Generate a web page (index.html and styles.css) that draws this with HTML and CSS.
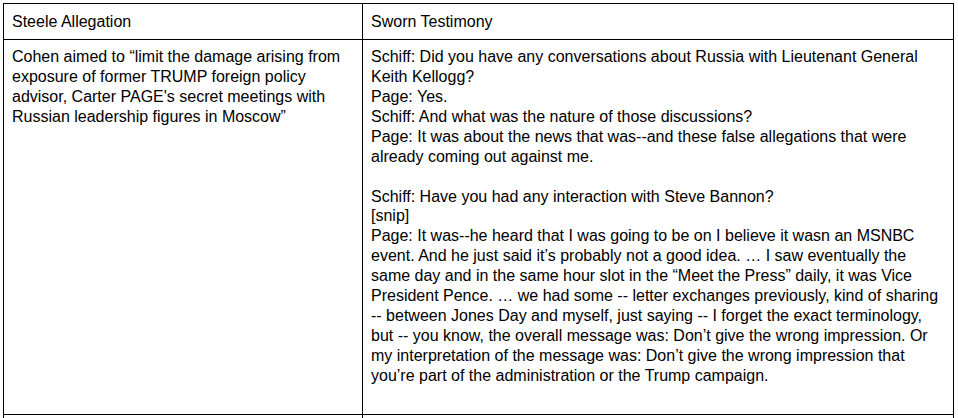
FILE: index.html
```html
<!DOCTYPE html>
<html>
<head>
<meta charset="utf-8">
<link rel="stylesheet" href="styles.css">
</head>
<body>
<table class="doc-table">
  <colgroup>
    <col class="col-left">
    <col class="col-right">
  </colgroup>
  <tr class="head-row">
    <td>Steele Allegation</td>
    <td>Sworn Testimony</td>
  </tr>
  <tr class="body-row">
    <td>Cohen aimed to “limit the damage arising from exposure of former TRUMP foreign policy advisor, Carter PAGE's secret meetings with Russian leadership figures in Moscow”</td>
    <td>
      <p>Schiff: Did you have any conversations about Russia with Lieutenant General Keith Kellogg?<br>Page: Yes.<br>Schiff: And what was the nature of those discussions?<br>Page: It was about the news that was--and these false allegations that were already coming out against me.</p>
      <p class="blank">&nbsp;</p>
      <p>Schiff: Have you had any interaction with Steve Bannon?<br>[snip]<br>Page: It was--he heard that I was going to be on I believe it wasn an MSNBC event. And he just said it’s probably not a good idea. … I saw eventually the same day and in the same hour slot in the “Meet the Press” daily, it was Vice President Pence. … we had some -- letter exchanges previously, kind of sharing -- between Jones Day and myself, just saying -- I forget the exact terminology, but -- you know, the overall message was: Don’t give the wrong impression. Or my interpretation of the message was: Don’t give the wrong impression that you’re part of the administration or the Trump campaign.</p>
      <p class="blank">&nbsp;</p>
    </td>
  </tr>
  <tr class="tail-row">
    <td>&nbsp;</td>
    <td>&nbsp;</td>
  </tr>
</table>
</body>
</html>
```
FILE: styles.css
```css
html, body {
  margin: 0;
  padding: 0;
  background: #ffffff;
}
body {
  padding: 3px 0 0 3px;
  font-family: "Liberation Sans", Arial, sans-serif;
  font-size: 16px;
  line-height: 19.94px;
  color: #000000;
}
.doc-table {
  border-collapse: collapse;
  table-layout: fixed;
  width: 950px;
}
.col-left { width: 359px; }
.col-right { width: 591px; }
.doc-table td {
  border: 1px solid #000000;
  padding: 7px 8px 8px 8px;
  vertical-align: top;
}
.head-row td {
  padding-top: 8px;
  padding-bottom: 7px;
}
.doc-table p {
  margin: 0;
}
.tail-row td {
  height: 40px;
}
```
